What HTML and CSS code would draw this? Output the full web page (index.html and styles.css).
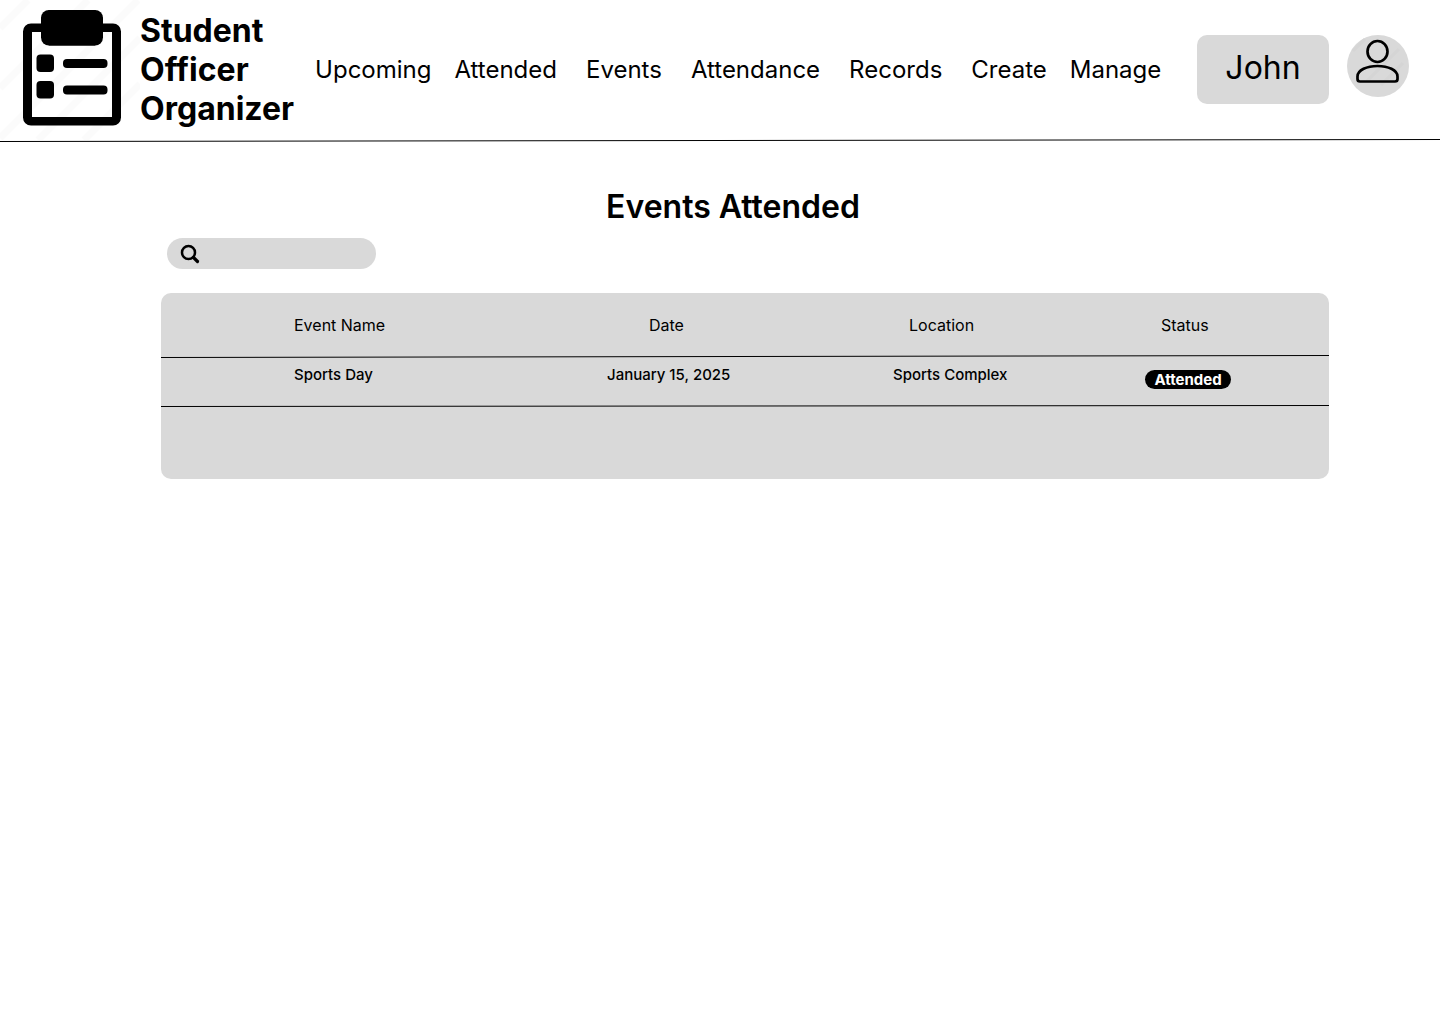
FILE: index.html
```html
<!DOCTYPE html>
<html lang="en">
<head>
  <meta charset="utf-8">
  <meta name="viewport" content="width=device-width, initial-scale=1">
  <title>Events Attended</title>
  <link rel="stylesheet" href="styles.css">
</head>
<body>
  <header class="site-header">
    <a class="brand" href="#">
      <svg class="brand-icon" viewBox="0 0 140 140" aria-hidden="true">
        <path d="M0 28 28 0M0 88 88 0M0 138 138 0M38 140 140 38M84 140 140 84" stroke="#fbfbfb" stroke-width="7"/>
        <path d="M44 23.500H31a8 8 0 0 0-8 8v86a8 8 0 0 0 8 8h82a8 8 0 0 0 8-8v-86a8 8 0 0 0-8-8h-13v8.500h12v85H32V32h12Z"/>
        <path d="M49 10h46l8 8v19l-8 8.500H49L41 37V18Z" stroke-linejoin="round"/>
        <rect x="41" y="10" width="62" height="35.500" rx="8"/>
        <rect x="36.500" y="54.500" width="17.500" height="17.500" rx="4"/>
        <rect x="36.500" y="81" width="17.500" height="17.500" rx="4"/>
        <rect x="63" y="59" width="44.500" height="9" rx="4"/>
        <rect x="63" y="85.500" width="44.500" height="9" rx="4"/>
      </svg>
      <span class="brand-name">Student<br>Officer<br>Organizer</span>
    </a>
    <nav class="nav" aria-label="Main">
      <div class="nav-pair">
        <a href="#">Upcoming</a>
        <a href="#">Attended</a>
      </div>
      <a href="#">Events</a>
      <a href="#">Attendance</a>
      <a href="#">Records</a>
      <div class="nav-pair">
        <a href="#">Create</a>
        <a href="#">Manage</a>
      </div>
    </nav>
    <div class="account">
      <button class="account-name" type="button">John</button>
      <button class="avatar" type="button" aria-label="Profile">
        <svg viewBox="0 0 62 62" aria-hidden="true" fill="none" stroke="#000" stroke-width="2.700" stroke-linejoin="round">
          <path d="M6 16 18 4M20 46 52 14M34 50 56 28" stroke="#d5d5d5" stroke-width="3"/>
          <ellipse cx="30.500" cy="16.500" rx="10" ry="10.500"/>
          <path d="M10.500 44V41.500C10.500 35 20 31 30.500 31S50.500 35 50.500 41.500V44Q50.500 46.500 48 46.500H13Q10.500 46.500 10.500 44Z"/>
        </svg>
      </button>
    </div>
  </header>
  <svg class="header-rule" viewBox="0 0 1440 3" preserveAspectRatio="none" aria-hidden="true">
    <path d="M0 2.500 1440 .5" stroke="#000"/>
  </svg>

  <main class="content">
    <h1 class="title">Events Attended</h1>
    <form class="search" role="search">
      <label for="search" aria-label="Search events">
        <svg viewBox="0 0 20 20" aria-hidden="true" fill="none" stroke="#000" stroke-linecap="round">
          <circle cx="8.500" cy="8.500" r="6.500" stroke-width="2.500"/>
          <path d="M13.500 13.500 17.500 17.500" stroke-width="3.200"/>
        </svg>
      </label>
      <input id="search" type="search">
    </form>
    <table class="events">
      <colgroup>
        <col>
        <col class="col-date">
        <col class="col-location">
        <col class="col-status">
      </colgroup>
      <thead>
        <tr>
          <th class="name" scope="col">Event Name</th>
          <th class="date" scope="col">Date</th>
          <th class="location" scope="col">Location</th>
          <th class="status" scope="col">Status</th>
        </tr>
      </thead>
      <tbody>
        <tr>
          <td class="name">Sports Day</td>
          <td>January 15, 2025</td>
          <td>Sports Complex</td>
          <td><span class="badge">Attended</span></td>
        </tr>
      </tbody>
    </table>
  </main>
</body>
</html>
```
FILE: styles.css
```css
* {
  box-sizing: border-box;
}

body {
  margin: 0;
  background: #fff;
  color: #000;
  font-family: Inter, "Liberation Sans", sans-serif;
}

a {
  color: inherit;
  text-decoration: none;
}

button {
  border: 0;
  padding: 0;
  background: #d9d9d9;
  color: inherit;
  font: inherit;
}

.site-header {
  display: flex;
  align-items: center;
  min-height: 139px;
  padding-right: 31px;
}

.brand {
  display: flex;
  align-items: center;
}

.brand-icon {
  display: block;
  width: 140px;
  height: 140px;
  margin-bottom: -1px;
}

.brand-name {
  font-size: 32px;
  font-weight: 700;
  line-height: 39px;
}

.nav {
  display: flex;
  gap: 29px;
  margin-left: 21px;
  font-size: 24px;
  line-height: 30px;
}

.nav-pair {
  display: flex;
  gap: 23px;
}

.account {
  display: flex;
  align-items: flex-start;
  gap: 18px;
  margin-left: auto;
}

.account-name {
  width: 132px;
  height: 69px;
  padding-bottom: 4px;
  border-radius: 10px;
  font-size: 32px;
}

.avatar {
  width: 62px;
  height: 62px;
  border-radius: 50%;
}

.avatar svg {
  display: block;
}

.header-rule {
  display: block;
  width: 100%;
  height: 3px;
}

.content {
  padding: 45px 111px 45px 161px;
}

.title {
  margin: 0;
  padding-right: 24px;
  font-size: 32px;
  font-weight: 600;
  line-height: 40px;
  text-align: center;
}

.search {
  display: flex;
  align-items: center;
  width: 209px;
  height: 31px;
  margin: 11px 6px 24px;
  padding: 0 13px;
  border-radius: 16px;
  background: #d9d9d9;
}

.search svg {
  display: block;
  width: 20px;
  height: 20px;
}

.search input {
  flex: 1;
  min-width: 0;
  margin-left: 8px;
  border: 0;
  outline: 0;
  background: none;
  font: inherit;
}

.events {
  width: 100%;
  padding-bottom: 72px;
  border-spacing: 0;
  border-radius: 10px;
  background: #d9d9d9;
  table-layout: fixed;
  text-align: left;
}

.col-date {
  width: 286px;
}

.col-location {
  width: 252px;
}

.col-status {
  width: 184px;
}

/* Row dividers rise slightly towards the right edge. */
.events tr {
  background: left bottom / 100% 3px no-repeat;
}

.events thead tr {
  background-image: url("data:image/svg+xml,%3Csvg xmlns='http://www.w3.org/2000/svg' viewBox='0 0 1168 3' preserveAspectRatio='none'%3E%3Cpath d='M0 2.500 1168 .5' stroke='%23000'/%3E%3C/svg%3E");
}

.events tbody tr {
  background-image: url("data:image/svg+xml,%3Csvg xmlns='http://www.w3.org/2000/svg' viewBox='0 0 1168 3' preserveAspectRatio='none'%3E%3Cpath d='M0 2.500 1168 1.500' stroke='%23000'/%3E%3C/svg%3E");
}

.events th {
  height: 65px;
  padding: 0 0 2px;
  font-size: 16px;
  font-weight: 400;
}

.events td {
  height: 49px;
  padding: 7px 0 0;
  font-size: 15px;
  font-weight: 500;
  line-height: 20px;
  vertical-align: top;
}

.events .name {
  padding-left: 133px;
}

.events .date {
  padding-left: 42px;
}

.events .location {
  padding-left: 16px;
}

.events .status {
  padding-left: 16px;
}

.badge {
  display: block;
  width: 86px;
  margin-top: 5px;
  border-radius: 10px;
  background: #000;
  color: #fff;
  font-weight: 700;
  line-height: 19px;
  text-align: center;
}
```
